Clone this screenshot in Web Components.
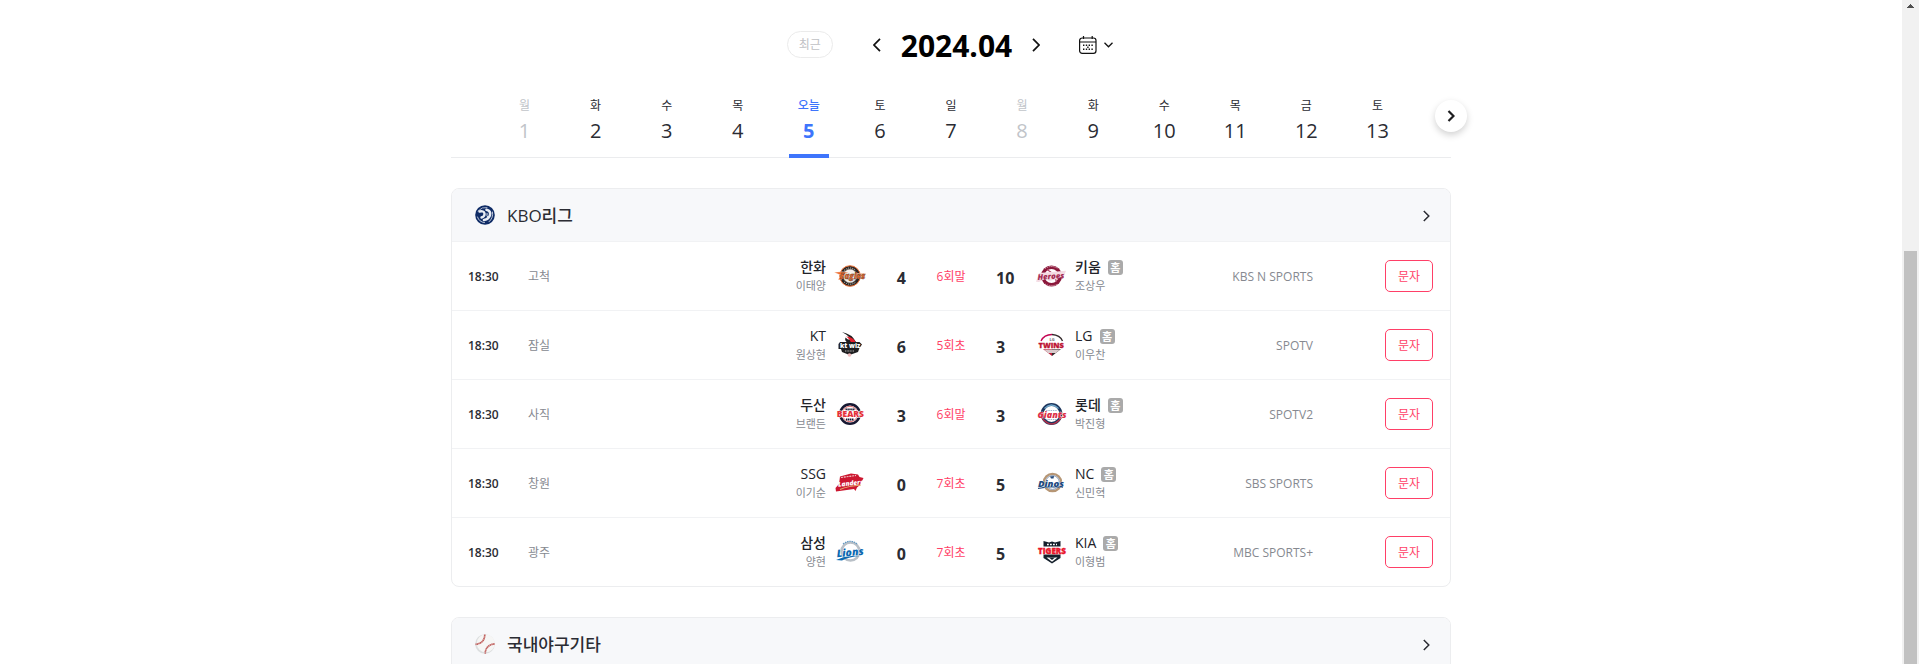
<!DOCTYPE html>
<html lang="ko">
<head>
<meta charset="utf-8">
<meta name="viewport" content="width=device-width, initial-scale=1">
<title>야구 일정 2024.04</title>
<style>
  html, body { margin: 0; height: 100%; }
  body {
    overflow: hidden;
    background: #fff;
    color: #2b2c33;
    font-family: "Open Sans", "Noto Sans CJK KR", sans-serif;
    --ink: #2b2c33;
    --muted: #868990;
    --faint: #c1c4c9;
    --line: #ecedef;
    --blue: #3e75fc;
    --red: #ff3f67;
  }
</style>
</head>
<body>
<schedule-page>
  <month-bar month="2024.04"></month-bar>
  <day-strip></day-strip>
  <league-card name="KBO리그" icon="kbo">
    <game-row time="18:30" venue="고척" away="한화" away-pitcher="이태양" away-logo="eagles" away-score="4" state="6회말" home="키움" home-pitcher="조상우" home-logo="heroes" home-score="10" channel="KBS N SPORTS"></game-row>
    <game-row time="18:30" venue="잠실" away="KT" away-pitcher="원상현" away-logo="wiz" away-score="6" state="5회초" home="LG" home-pitcher="이우찬" home-logo="twins" home-score="3" channel="SPOTV"></game-row>
    <game-row time="18:30" venue="사직" away="두산" away-pitcher="브랜든" away-logo="bears" away-score="3" state="6회말" home="롯데" home-pitcher="박진형" home-logo="giants" home-score="3" channel="SPOTV2"></game-row>
    <game-row time="18:30" venue="창원" away="SSG" away-pitcher="이기순" away-logo="landers" away-score="0" state="7회초" home="NC" home-pitcher="신민혁" home-logo="dinos" home-score="5" channel="SBS SPORTS"></game-row>
    <game-row time="18:30" venue="광주" away="삼성" away-pitcher="양현" away-logo="lions" away-score="0" state="7회초" home="KIA" home-pitcher="이형범" home-logo="tigers" home-score="5" channel="MBC SPORTS+"></game-row>
  </league-card>
  <league-card name="국내야구기타" icon="ball"></league-card>
</schedule-page>

<script>
const LOGOS = {
  kbo: `<svg viewBox="0 0 20 20"><circle cx="10" cy="10" r="9.8" fill="#0f2c66"/><g fill="none" stroke="#e9edf5" stroke-linecap="round"><path d="M3 6Q7 1.500 12 2.500" stroke-width=".7"/><path d="M17.500 7Q18.500 13 14 16.800" stroke-width=".8"/><path d="M2.500 12Q4 17 9.500 17.600" stroke-width=".8"/><path d="M4.500 6.500Q9 5.500 9.500 8.500T6.500 12.500" stroke-width="2.400"/><path d="M11.500 4.800Q16 6 15 10T9 15" stroke-width="2.600"/><path d="M12 8.500Q11.500 11 12.500 12" stroke-width="1"/></g></svg>`,
  ball: `<svg viewBox="0 0 20 20"><circle cx="10" cy="10" r="9.800" fill="#dcdedf"/><circle cx="10.800" cy="9.300" r="9" fill="#f6f6f5"/><g fill="none" stroke="#c0605e" stroke-width="1.700" stroke-dasharray="1.500 .3"><path d="M9.800 .5Q9.500 9.500 .5 10.300"/><path d="M19.600 9.800Q10.500 11 10.200 19.600"/></g></svg>`,
  eagles: `<svg viewBox="0 0 32 32"><circle cx="16" cy="16" r="10.300" fill="#2b2623" stroke="#ee7339" stroke-width="1"/><circle cx="16" cy="16" r="6.800" fill="#f6f1ec" stroke="#a8a09b" stroke-width=".6"/><g fill="none" stroke="#c9c2bc" stroke-dasharray="1.200 1"><path d="M10 10.500Q16 5.500 22 10.500M10 22Q16 26.500 22 22"/></g><path d="M0 12.300Q8 11 15 12.500L10 14L7.500 19.800H4L7 15.300Z" fill="#ed6b2d" stroke="#fff" stroke-width=".4"/><path d="M22 13L32 13.500L29 18L22 18.500Z" fill="#f1b595"/><text x="6" y="18.800" font-size="8" font-weight="800" font-style="italic" fill="#ed6b2d" stroke="#2b2623" stroke-width=".3">Eagles</text></svg>`,
  heroes: `<svg viewBox="0 0 32 32"><circle cx="15.500" cy="16" r="10.500" fill="#8b183b"/><circle cx="15.500" cy="16" r="7" fill="#fff"/><path d="M11 9.500Q19 14 20.500 22" fill="none" stroke="#ad3d60" stroke-width="1.300"/><path d="M9 8.500Q15.500 4.500 22 8.500M9 24Q15.500 27.500 22 24" fill="none" stroke="#e3b7c4" stroke-dasharray="1.200 1"/><path d="M0 21.800L3 13L30 10.700L28 16L19 19.500L13 21L10 18.500L3 22Z" fill="#f4dbe3"/><text x="1.500" y="19" font-size="7.800" font-weight="800" font-style="italic" fill="#a42c53" transform="rotate(-4 16 16)">Heroes</text></svg>`,
  wiz: `<svg viewBox="0 0 32 32"><path d="M8 3Q18 5 22 13L14.500 14Q10 12 11.500 8.500Q15 12 17 10Q14 6 8 3Z" fill="#1e1e20"/><path d="M12 7.500Q20 8 22 14H17Q16 10 12 7.500Z" fill="#e3202d"/><path d="M6 13L25.500 13L28 15.500L25.500 19L24 23L15.500 26L8 23L7 20L4.500 20V15Z" fill="#1e1e20"/><text x="6" y="19" font-size="6.500" font-weight="800" fill="#fff">kt wiz</text><path d="M11 22H20" stroke="#bbb" stroke-width="1.200" stroke-dasharray="1 .6"/><circle cx="15.500" cy="26" r="1.800" fill="#efbcbd"/></svg>`,
  twins: `<svg viewBox="0 0 32 32"><path d="M5 12Q8 5.500 16 5.500" fill="none" stroke="#c30452" stroke-width="1.300"/><path d="M16 5.500Q24 6 26.500 12" fill="none" stroke="#33292b" stroke-width="1.300"/><path d="M7 20L16 20L16 27Z" fill="#c11e3c"/><path d="M25 20L16 20L16 27Z" fill="#33292b"/><path d="M8 20.500H24L20 24H12Z" fill="#d9c9cb"/><text x="13.500" y="11.500" font-size="4" font-weight="700" fill="#666">LG</text><text x="2.500" y="19.300" font-size="7.500" font-weight="800" fill="#bd1433" stroke="#bd1433" stroke-width=".3">TWINS</text></svg>`,
  bears: `<svg viewBox="0 0 32 32"><circle cx="16" cy="16" r="9.800" fill="#fff" stroke="#171832" stroke-width="2.500"/><circle cx="16" cy="16" r="7.700" fill="none" stroke="#d84a4e" stroke-width=".8"/><path d="M11.500 11.500H20.500M12 21.500H20" stroke="#171832" stroke-width="1.800" stroke-dasharray="1.400 .5"/><text x="2.800" y="19.200" font-size="8.500" font-weight="800" fill="#e52f38" stroke="#fff" stroke-width="1.200" paint-order="stroke">BEARS</text></svg>`,
  giants: `<svg viewBox="0 0 32 32"><circle cx="15.500" cy="16" r="9.400" fill="#fff" stroke="#1d365d" stroke-width="3"/><path d="M8.500 10.500Q15.500 3.500 22.500 10.500" fill="none" stroke="#6fa8cb" stroke-width="1.300"/><path d="M6 20Q15.500 32 25 20" fill="none" stroke="#b63149" stroke-width="1.300"/><path d="M10 12.500H21M10 21.500H21" stroke="#9eb9d1" stroke-dasharray="1.500 .8"/><text x="1.500" y="19.500" font-size="9" font-weight="800" font-style="italic" fill="#dc2f47" stroke="#fff" stroke-width=".6" paint-order="stroke">Giants</text></svg>`,
  landers: `<svg viewBox="0 0 32 32"><path d="M6 9.500L17 6.500L24 7.500L25.500 10L29.500 11L26 18L23 20.500L21.500 24L20 22L2 24.500L1.500 21L5 17Z" fill="#cc1730"/><path d="M7 10.500L22 8.500" stroke="#f2c6c6" stroke-width="1.200" stroke-dasharray="2 .8"/><path d="M6 22.500Q14 19 27 18" fill="none" stroke="#e4ad6d" stroke-width="1.200"/><text x="4" y="18.500" font-size="6.500" font-weight="800" font-style="italic" fill="#fff" transform="rotate(-6 16 16)">Landers</text></svg>`,
  dinos: `<svg viewBox="0 0 32 32"><circle cx="16.500" cy="15.500" r="8.700" fill="#fff" stroke="#b69675" stroke-width="2.200"/><circle cx="16.500" cy="15.500" r="6.900" fill="none" stroke="#365886" stroke-width=".6"/><path d="M14 9.500L18 9L17.500 11.500H15Z" fill="#244a7c"/><path d="M2 21.300Q12 19.300 27 20" fill="none" stroke="#244a7c" stroke-width="1.300"/><text x="2" y="19.800" font-size="9.500" font-weight="800" font-style="italic" fill="#204980" stroke="#fff" stroke-width=".6" paint-order="stroke">Dinos</text></svg>`,
  lions: `<svg viewBox="0 0 32 32"><circle cx="16.500" cy="15.500" r="9" fill="#fff" stroke="#b9c0c7" stroke-width="2.600"/><path d="M9 8Q16.500 2.500 23 8" fill="none" stroke="#629ac3" stroke-width="1.200" stroke-dasharray="1.500 .8"/><path d="M2 24Q14 18.500 26 20Q15 20.500 8 24.500Z" fill="#0c69b1"/><text x="2.500" y="20" font-size="10.500" font-weight="800" font-style="italic" fill="#0c69b1" stroke="#fff" stroke-width=".6" paint-order="stroke" transform="rotate(-5 16 16)">Lions</text></svg>`,
  tigers: `<svg viewBox="0 0 32 32"><path d="M7.500 5L13 6.500L16 5.500L19 6.500L24.500 5V22L16 27.500L7.500 22Z" fill="#15202c"/><path d="M11 8.500H21" stroke="#fff" stroke-width="1.600" stroke-dasharray="1.800 1.200"/><path d="M10.500 21.500L21.500 21.500L16 25.800Z" fill="#fff"/><path d="M13 21.500L16 24L19 21.500Z" fill="#15202c"/><path d="M2 10.500H30V18.500H2Z" fill="#fff"/><text x="2" y="17.500" font-size="8" font-weight="800" fill="#e9142b" stroke="#e9142b" stroke-width=".4">TIGERS</text></svg>`
};

function define(name, render) {
  customElements.define(name, class extends HTMLElement {
    connectedCallback() {
      if (this.shadowRoot) return;
      this.attachShadow({ mode: "open" }).innerHTML = render(key => this.getAttribute(key) || "");
    }
  });
}

/* Page frame: scrolling content plus its scrollbar track */
define("schedule-page", () => `
  <style>
    :host { display: flex; height: 100vh; overflow: hidden; }
    main { flex: 1; min-width: 0; padding: 0 24px; }
    .content { max-width: 1000px; margin: 0 auto; }
  </style>
  <main><div class="content"><slot></slot></div></main>
  <page-scrollbar></page-scrollbar>`);

define("page-scrollbar", () => `
  <style>
    :host { display: flex; flex-direction: column; width: 17px; background: #f1f1f1; }
    svg { width: 17px; height: 17px; display: block; }
    .gap { flex: 234; }
    .thumb { flex: 413; margin: 0 2px; background: #c1c1c1; }
  </style>
  <svg viewBox="0 0 17 17" shape-rendering="crispEdges"><path d="M5 8h7v-1h-1v-1h-1v-1h-1v-1h-1v1h-1v1h-1v1h-1z" fill="#505050"/></svg>
  <div class="gap"></div><div class="thumb"></div>`);

define("team-logo", attr => `
  <style>
    :host { display: block; width: 32px; height: 32px; font-family: "Open Sans", sans-serif; }
    svg { display: block; width: 100%; height: 100%; overflow: visible; }
  </style>${LOGOS[attr("team")]}`);

define("month-bar", attr => `
  <style>
    :host { display: flex; align-items: center; justify-content: center; padding-top: 23px; height: 43px; }
    button { box-sizing: border-box; margin: 0; padding: 0; border: 0; background: none; font: inherit; color: #111; display: flex; align-items: center; justify-content: center; cursor: pointer; }
    .recent { width: 46px; height: 27px; border: 1px solid #ebebeb; border-radius: 14px; font-size: 12px; line-height: 20px; color: #bfc1c4; margin-right: 32px; }
    .step { width: 24px; height: 32px; }
    h1 { margin: 0 12px; padding-top: 3px; font-size: 30px; line-height: 40px; font-weight: 700; color: #000; }
    .calendar { margin-left: 29px; gap: 7px; padding: 0 2px; height: 28px; }
    svg { display: block; fill: none; stroke: currentColor; }
  </style>
  <button class="recent">최근</button>
  <button class="step" aria-label="이전 달"><svg width="8" height="14" viewBox="0 0 8 14" stroke-width="1.700"><path d="M7 .8L1 7L7 13.200"/></svg></button>
  <h1>${attr("month")}</h1>
  <button class="step" aria-label="다음 달"><svg width="8" height="14" viewBox="0 0 8 14" stroke-width="1.700"><path d="M1 .8L7 7L1 13.200"/></svg></button>
  <button class="calendar" aria-label="달력 열기">
    <svg width="18" height="18" viewBox="0 0 18 18" stroke-width="1.200"><rect x=".6" y="2" width="16.400" height="15.400" rx="2.600"/><path d="M.6 6H17M4.500 0V3M13.200 0V3"/><g fill="currentColor" stroke="none"><path d="M4 8.500h1.400v1.400H4zM6.800 8.500h1.400v1.400H6.800zM9.600 8.500H11v1.400H9.600zM12.400 8.500h1.400v1.400h-1.400zM4 12.500h1.400v1.400H4zM6.800 12.500h1.400v1.400H6.800zM9.600 12.500H11v1.400H9.600zM12.400 12.500h1.400v1.400h-1.400zM8.200 10.500h1.400v1.400H8.200z"/></g></svg>
    <svg width="9" height="6" viewBox="0 0 9 6" stroke-width="1.300"><path d="M.5 .8L4.500 4.800L8.500 .8"/></svg>
  </button>`);

const DAYS = ["월", "화", "수", "목", "오늘", "토", "일", "월", "화", "수", "목", "금", "토"];
const OFF_DAYS = [1, 8];
define("day-strip", () => `
  <style>
    :host { display: block; position: relative; padding: 32px 38px 0; border-bottom: 1px solid #ebecee; }
    nav { display: grid; grid-template-columns: repeat(13, 1fr); }
    a { display: flex; flex-direction: column; align-items: center; height: 59px; color: var(--ink); text-decoration: none; position: relative; }
    .week { font-size: 12px; line-height: 16px; }
    .date { font-size: 20px; line-height: 26px; margin-top: 4px; }
    .off { color: var(--faint); }
    .today { color: var(--blue); }
    .today .week { font-weight: 500; }
    .today .date { font-weight: 700; }
    .today::after { content: ""; position: absolute; bottom: -1px; left: 50%; width: 40px; height: 4px; margin-left: -20px; background: var(--blue); }
    button { position: absolute; right: -16px; top: 34px; width: 32px; height: 32px; padding: 0; border: 0; border-radius: 50%; background: #fff; color: #1e1e20; box-shadow: 0 3px 7px rgba(0, 0, 0, .18); display: flex; align-items: center; justify-content: center; }
    svg { fill: none; stroke: currentColor; stroke-width: 2.200; }
  </style>
  <nav aria-label="날짜">${DAYS.map((week, i) => `
    <a href="#day-${i + 1}" class="${week === "오늘" ? "today" : OFF_DAYS.includes(i + 1) ? "off" : ""}"><span class="week">${week}</span><span class="date">${i + 1}</span></a>`).join("")}
  </nav>
  <button aria-label="다음 날짜"><svg width="8" height="12" viewBox="0 0 8 12"><path d="M1.500 1L6.500 6L1.500 11"/></svg></button>`);

define("league-card", attr => `
  <style>
    :host { display: block; margin-top: 30px; border: 1px solid var(--line); border-radius: 8px; overflow: hidden; }
    a { display: flex; align-items: center; height: 52px; padding: 0 20px 0 23px; background: #f7f8fa; border-bottom: 1px solid #f1f2f4; color: var(--ink); text-decoration: none; }
    team-logo { width: 20px; height: 20px; }
    h2 { flex: 1; margin: 0 0 0 12px; padding-top: 2px; font-size: 17px; line-height: 24px; font-weight: 500; }
    svg { fill: none; stroke: currentColor; stroke-width: 1.500; padding-top: 2px; }
  </style>
  <a href="#league"><team-logo team="${attr("icon")}"></team-logo><h2>${attr("name")}</h2>
    <svg width="7" height="12" viewBox="0 0 7 12"><path d="M.8 1L5.800 6L.8 11"/></svg></a>
  <slot></slot>`);

define("game-row", attr => `
  <style>
    :host { display: grid; grid-template-columns: 1fr 32px 40px 90px 40px 32px 1fr; align-items: center; height: 68px; border-bottom: 1px solid #f1f2f4; font-size: 12px; line-height: 18px; }
    :host(:last-of-type) { border-bottom: 0; }
    .side { display: flex; align-items: center; min-width: 0; }
    time, .venue, .channel, .state { padding-top: 2px; }
    time { width: 60px; margin-left: 16px; font-weight: 600; }
    .venue, .channel { color: var(--muted); }
    .team { display: flex; flex-direction: column; }
    .away { margin: 0 8px 0 auto; align-items: flex-end; }
    .home { margin: 0 auto 0 7px; }
    .name { display: flex; align-items: center; gap: 7px; font-size: 14px; line-height: 20px; font-weight: 500; color: #222329; }
    .pitcher { font-size: 11px; line-height: 18px; color: var(--muted); }
    .badge { width: 15px; height: 15px; border-radius: 3px; background: #aaa; color: #fff; font-size: 11px; line-height: 15px; font-weight: 700; text-align: center; }
    .score { padding-top: 3px; font-size: 16px; line-height: 24px; font-weight: 700; }
    .left { text-align: right; }
    .state { text-align: center; color: var(--red); }
    button { box-sizing: border-box; width: 48px; height: 32px; margin: 0 17px 0 72px; padding: 2px 0 0; border: 1px solid var(--red); border-radius: 5px; background: #fff; color: var(--red); font: inherit; }
  </style>
  <div class="side"><time>${attr("time")}</time><span class="venue">${attr("venue")}</span>
    <div class="team away"><span class="name">${attr("away")}</span><span class="pitcher">${attr("away-pitcher")}</span></div></div>
  <team-logo team="${attr("away-logo")}"></team-logo>
  <strong class="score left">${attr("away-score")}</strong>
  <span class="state">${attr("state")}</span>
  <strong class="score">${attr("home-score")}</strong>
  <team-logo team="${attr("home-logo")}"></team-logo>
  <div class="side"><div class="team home"><span class="name">${attr("home")}<span class="badge">홈</span></span><span class="pitcher">${attr("home-pitcher")}</span></div>
    <span class="channel">${attr("channel")}</span><button>문자</button></div>`);
</script>
</body>
</html>
